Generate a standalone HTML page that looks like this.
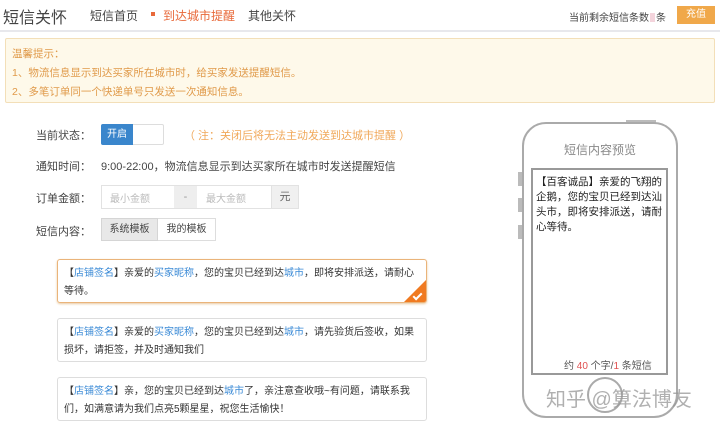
<!DOCTYPE html>
<html><head><meta charset="utf-8"><style>
*{margin:0;padding:0;box-sizing:border-box}
body{width:720px;height:427px;background:#fff;font-family:"Liberation Sans","Noto Sans CJK SC",sans-serif;color:#333;position:relative;overflow:hidden;font-size:11px}
.a{position:absolute;white-space:nowrap}
.b{color:#3a8ad6}
</style></head><body>
<div class="a" style="left:3px;top:4px;font-size:16px;color:#444">短信关怀</div>
<div class="a" style="left:90px;top:7px;font-size:12px;color:#444">短信首页</div>
<div class="a" style="left:151px;top:12px;width:4px;height:4px;background:#e8693a"></div>
<div class="a" style="left:163px;top:7px;font-size:12px;color:#e8693a">到达城市提醒</div>
<div class="a" style="left:248px;top:7px;font-size:12px;color:#444">其他关怀</div>
<div class="a" style="left:569px;top:9px;font-size:10px;color:#444">当前剩余短信条数<span style="display:inline-block;width:5px;height:9px;background:#f4d4dc;margin:0 1px;vertical-align:-1px"></span>条</div>
<div class="a" style="left:677px;top:6px;width:38px;height:18px;background:#f0a84a;color:#fff;font-size:10px;text-align:center;line-height:18px">充值</div>
<div class="a" style="left:0;top:30px;width:720px;height:2px;background:#e8e8ec"></div>
<div class="a" style="left:5px;top:38px;width:710px;height:65px;background:#fef9ea;border:1px solid #f3dfb8;border-radius:2px"></div>
<div class="a" style="left:12px;top:45px;font-size:10.5px;color:#e09a4a;line-height:19px">温馨提示：<br>1、物流信息显示到达买家所在城市时，给买家发送提醒短信。<br>2、多笔订单同一个快递单号只发送一次通知信息。</div>

<div class="a" style="left:36px;top:127px;color:#444">当前状态：</div>
<div class="a" style="left:101px;top:124px;width:63px;height:21px;border:1px solid #ddd;border-radius:2px"></div>
<div class="a" style="left:101px;top:124px;width:32px;height:21px;background:#3a86cc;color:#fff;font-size:10px;text-align:center;line-height:21px;border-radius:2px 0 0 2px">开启</div>
<div class="a" style="left:184px;top:127px;color:#f0a85a">（ 注：关闭后将无法主动发送到达城市提醒 ）</div>

<div class="a" style="left:36px;top:158px;color:#444">通知时间：</div>
<div class="a" style="left:101px;top:158px;color:#444">9:00-22:00，物流信息显示到达买家所在城市时发送提醒短信</div>

<div class="a" style="left:36px;top:190px;color:#444">订单金额：</div>
<div class="a" style="left:101px;top:185px;width:198px;height:24px;border:1px solid #e2e2e2"></div>
<div class="a" style="left:174px;top:186px;width:23px;height:22px;background:#eee;color:#999;text-align:center;line-height:22px">-</div>
<div class="a" style="left:271px;top:186px;width:27px;height:22px;background:#f0f0f0;color:#666;text-align:center;line-height:22px;border-left:1px solid #e2e2e2">元</div>
<div class="a" style="left:110px;top:190px;color:#bbb;font-size:10px">最小金额</div>
<div class="a" style="left:206px;top:190px;color:#bbb;font-size:10px">最大金额</div>

<div class="a" style="left:36px;top:223px;color:#444">短信内容：</div>
<div class="a" style="left:101px;top:218px;width:57px;height:23px;background:#e8e8e8;border:1px solid #d5d5d5;text-align:center;line-height:21px;font-size:10px;color:#444">系统模板</div>
<div class="a" style="left:158px;top:218px;width:58px;height:23px;border:1px solid #ddd;border-left:none;text-align:center;line-height:21px;font-size:10px;color:#444">我的模板</div>

<div class="a" style="left:57px;top:259px;width:370px;height:44px;border:1px solid #eab47a;border-radius:3px;box-shadow:0 1px 2px #e8c9a0;overflow:hidden">
<div style="position:absolute;right:-1px;bottom:-1px;width:0;height:0;border-left:24px solid transparent;border-bottom:24px solid #f07a20"></div>
<div style="position:absolute;right:4px;bottom:4px;width:9px;height:5px;border-left:2px solid #fff;border-bottom:2px solid #fff;transform:rotate(-45deg)"></div>
</div>
<div class="a" style="left:64px;top:265px;line-height:18px;font-size:10px">【<span class="b">店铺签名</span>】亲爱的<span class="b">买家昵称</span>，您的宝贝已经到达<span class="b">城市</span>，即将安排派送，请耐心<br>等待。</div>
<div class="a" style="left:57px;top:318px;width:370px;height:44px;border:1px solid #ddd;border-radius:3px"></div>
<div class="a" style="left:64px;top:324px;line-height:18px;font-size:10px">【<span class="b">店铺签名</span>】亲爱的<span class="b">买家昵称</span>，您的宝贝已经到达<span class="b">城市</span>，请先验货后签收，如果<br>损坏，请拒签，并及时通知我们</div>
<div class="a" style="left:57px;top:377px;width:370px;height:44px;border:1px solid #ddd;border-radius:3px"></div>
<div class="a" style="left:64px;top:383px;line-height:18px;font-size:10px">【<span class="b">店铺签名</span>】亲，您的宝贝已经到达<span class="b">城市</span>了，亲注意查收哦~有问题，请联系我<br>们，如满意请为我们点亮5颗星星，祝您生活愉快！</div>

<div class="a" style="left:518px;top:172px;width:4px;height:14px;background:#bbb"></div>
<div class="a" style="left:518px;top:198px;width:4px;height:14px;background:#bbb"></div>
<div class="a" style="left:518px;top:225px;width:4px;height:14px;background:#bbb"></div>
<div class="a" style="left:626px;top:120px;width:30px;height:3px;background:#bbb"></div>
<div class="a" style="left:522px;top:122px;width:156px;height:296px;border:2px solid #aaa;border-radius:24px"></div>
<div class="a" style="left:564px;top:141px;font-size:12px;color:#888">短信内容预览</div>
<div class="a" style="left:531px;top:168px;width:137px;height:207px;border:2px solid #999"></div>
<div class="a" style="left:536px;top:175px;width:132px;white-space:normal;line-height:15px;font-size:10.5px;color:#222">【百客诚品】亲爱的飞翔的企鹅，您的宝贝已经到达汕头市，即将安排派送，请耐心等待。</div>
<div class="a" style="left:564px;top:357px;font-size:10px;color:#555">约 <span style="color:#e05050">40</span> 个字/<span style="color:#e05050">1</span> 条短信</div>
<div class="a" style="left:587px;top:377px;width:36px;height:36px;border:2px solid #aaa;border-radius:50%"></div>
<div class="a" style="left:546px;top:383px;font-size:20px;color:rgba(150,150,150,0.75)">知乎 @算法博友</div>
</body></html>
